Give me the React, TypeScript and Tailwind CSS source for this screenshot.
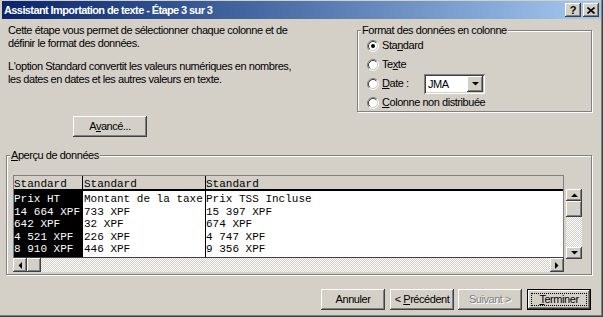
import React from 'react';

const raised =
  'shadow-[inset_-1px_-1px_#404040,inset_1px_1px_#ffffff,inset_-2px_-2px_#808080,inset_2px_2px_#d4d0c8]';
const sunken =
  'shadow-[inset_1px_1px_#808080,inset_-1px_-1px_#ffffff,inset_2px_2px_#404040,inset_-2px_-2px_#d4d0c8]';
const checker = 'bg-[repeating-conic-gradient(#ffffff_0_25%,#d4d0c8_0_50%)] bg-[length:2px_2px]';

function Radio({ checked }: { checked?: boolean }) {
  return (
    <svg width="12" height="12" viewBox="0 0 12 12" className="shrink-0">
      <circle cx="6" cy="6" r="4.5" fill="#ffffff" />
      <path d="M2.11 9.89 A5.5 5.5 0 0 1 9.89 2.11" stroke="#808080" fill="none" />
      <path d="M9.89 2.11 A5.5 5.5 0 0 1 2.11 9.89" stroke="#ffffff" fill="none" />
      <path d="M2.82 9.18 A4.5 4.5 0 0 1 9.18 2.82" stroke="#404040" fill="none" />
      <path d="M9.18 2.82 A4.5 4.5 0 0 1 2.82 9.18" stroke="#d4d0c8" fill="none" />
      {checked && <circle cx="6" cy="6" r="2" fill="#000000" />}
    </svg>
  );
}

function Arrow({ dir }: { dir: 'up' | 'down' | 'left' | 'right' }) {
  const pts = {
    up: '0,4 7,4 3.5,0.5',
    down: '0,0 7,0 3.5,3.5',
    left: '4,0 4,7 0.5,3.5',
    right: '0,0 0,7 3.5,3.5',
  }[dir];
  const vertical = dir === 'up' || dir === 'down';
  return (
    <svg width={vertical ? 7 : 4} height={vertical ? 4 : 7} viewBox={vertical ? '0 0 7 4' : '0 0 4 7'}>
      <polygon points={pts} fill="#000000" />
    </svg>
  );
}

function Key({ children }: { children: React.ReactNode }) {
  return <span className="underline underline-offset-[1px]">{children}</span>;
}

function Button({ children, w = 'w-[64px]', className = '' }: { children: React.ReactNode; w?: string; className?: string }) {
  return (
    <div className={`${w} h-[21px] ${raised} flex items-center justify-center ${className}`}>{children}</div>
  );
}

const col1 = ['Prix HT', '14 664 XPF', '642 XPF', '4 521 XPF', '8 910 XPF'];
const col2 = ['Montant de la taxe', '733 XPF', '32 XPF', '226 XPF', '446 XPF'];
const col3 = ['Prix TSS Incluse', '15 397 XPF', '674 XPF', '4 747 XPF', '9 356 XPF'];

export default function App() {
  return (
    <div className="w-[603px] h-[317px] bg-[#d4d0c8] px-[2px] pt-[1px] text-[11px] leading-[13px] tracking-[-0.45px] text-black font-['Liberation_Sans',Arial,sans-serif] overflow-hidden shadow-[inset_-1px_-1px_#404040,inset_-2px_-2px_#808080]">
      {/* title bar */}
      <div className="h-[18px] flex items-center pl-[2px] pr-[2px] bg-linear-to-r from-[#0a246a] to-[#a6caf0]">
        <span className="text-white font-bold text-[11px] tracking-[-0.6px]">Assistant Importation de texte - Étape 3 sur 3</span>
        <div className="ml-auto flex gap-[2px]">
          <div className={`w-[16px] h-[14px] bg-[#d4d0c8] ${raised} flex items-center justify-center font-bold text-[11px] leading-none`}>
            ?
          </div>
          <div className={`w-[16px] h-[14px] bg-[#d4d0c8] ${raised} flex items-center justify-center`}>
            <svg width="8" height="7" viewBox="0 0 8 7">
              <path d="M0.5 0.5 L7.5 6.5 M7.5 0.5 L0.5 6.5" stroke="#000" strokeWidth="1.6" />
            </svg>
          </div>
        </div>
      </div>

      {/* top section */}
      <div className="flex mt-[5px]">
        <div className="pl-[6px]">
          <p>Cette étape vous permet de sélectionner chaque colonne et de</p>
          <p>définir le format des données.</p>
          <p className="mt-[10px]">L'option Standard convertit les valeurs numériques en nombres,</p>
          <p>les dates en dates et les autres valeurs en texte.</p>
        </div>
        <fieldset className="ml-auto mr-[9px] w-[235px] h-[88px] border border-[#808080] shadow-[inset_1px_1px_#ffffff,1px_1px_#ffffff]">
          <legend className="ml-[3px] px-[1px] bg-[#d4d0c8]">Format des données en colonne</legend>
          <div className="-mt-[1px] pl-[9px]">
            <div className="h-[19px] flex items-center gap-[3px]">
              <Radio checked />
              <span>
                Sta<Key>n</Key>dard
              </span>
            </div>
            <div className="h-[19px] flex items-center gap-[3px]">
              <Radio />
              <span>
                Te<Key>x</Key>te
              </span>
            </div>
            <div className="h-[19px] flex items-center gap-[3px]">
              <Radio />
              <span className="w-[39px]">
                <Key>D</Key>ate :
              </span>
              <div className={`w-[61px] h-[20px] bg-white ${sunken} p-[2px] flex`}>
                <span className="flex-1 pl-[2px] leading-[16px]">JMA</span>
                <div className={`w-[16px] h-[16px] bg-[#d4d0c8] ${raised} flex items-center justify-center`}>
                  <Arrow dir="down" />
                </div>
              </div>
            </div>
            <div className="h-[19px] flex items-center gap-[3px]">
              <Radio />
              <span>
                <Key>C</Key>olonne non distribuée
              </span>
            </div>
          </div>
        </fieldset>
      </div>

      <Button w="w-[74px]" className="ml-[71px] mt-[4px] h-[20px]">
        <span>
          A<Key>v</Key>ancé...
        </span>
      </Button>

      {/* preview */}
      <fieldset className="mt-[12px] ml-[4px] mr-[9px] h-[126px] border border-[#808080] shadow-[inset_1px_1px_#ffffff,1px_1px_#ffffff]">
        <legend className="ml-[3px] px-[1px] bg-[#d4d0c8]">
          <Key>A</Key>perçu de données
        </legend>
        <div className="flex gap-[2px] pl-[6px] mt-[13px]">
          <div className="w-[551px]">
            <div className="h-[83px] border border-[#808080] border-b-[#404040] bg-white flex font-['Liberation_Mono',monospace] text-[11px] tracking-normal">
              <div className="w-[69px] border-r border-black flex flex-col">
                <div className="h-[15px] pt-[2px] leading-[12px] bg-[#d4d0c8] border-b-2 border-black">Standard</div>
                <div className="flex-1 bg-black text-white pt-[2px] leading-[12.5px] whitespace-pre">
                  {col1.map((t) => (
                    <div key={t}>{t}</div>
                  ))}
                </div>
              </div>
              <div className="w-[123px] border-r border-black flex flex-col">
                <div className="h-[15px] pt-[2px] pl-[1px] leading-[12px] bg-[#d4d0c8] border-b-2 border-black">Standard</div>
                <div className="flex-1 pl-[1px] pt-[2px] leading-[12.5px] whitespace-pre">
                  {col2.map((t) => (
                    <div key={t}>{t}</div>
                  ))}
                </div>
              </div>
              <div className="flex-1 flex flex-col">
                <div className="h-[15px] pt-[2px] leading-[12px] bg-[#d4d0c8] border-b-2 border-black">Standard</div>
                <div className="flex-1 pt-[2px] leading-[12.5px] whitespace-pre">
                  {col3.map((t) => (
                    <div key={t}>{t}</div>
                  ))}
                </div>
              </div>
            </div>
            <div className={`h-[14px] flex ${checker}`}>
              <div className={`w-[14px] h-full bg-[#d4d0c8] ${raised} flex items-center justify-center`}>
                <Arrow dir="left" />
              </div>
              <div className={`w-[14px] h-full bg-[#d4d0c8] ${raised}`} />
              <div className={`ml-auto w-[14px] h-full bg-[#d4d0c8] ${raised} flex items-center justify-center`}>
                <Arrow dir="right" />
              </div>
            </div>
          </div>
          <div className={`mt-[14px] w-[16px] h-[70px] flex flex-col ${checker}`}>
            <div className={`h-[12px] bg-[#d4d0c8] ${raised} flex items-center justify-center`}>
              <Arrow dir="up" />
            </div>
            <div className={`h-[16px] bg-[#d4d0c8] ${raised}`} />
            <div className={`mt-auto h-[12px] bg-[#d4d0c8] ${raised} flex items-center justify-center`}>
              <Arrow dir="down" />
            </div>
          </div>
        </div>
      </fieldset>

      {/* buttons */}
      <div className="flex justify-end mr-[10px] mt-[14px]">
        <Button>Annuler</Button>
        <Button className="ml-[5px]">
          <span>
            &lt; <Key>P</Key>récédent
          </span>
        </Button>
        <Button className="ml-[4px] text-[#808080] [text-shadow:1px_1px_#ffffff]">Suivant &gt;</Button>
        <div className="ml-[5px] w-[64px] h-[21px] border border-black">
          <div className={`h-full ${raised} p-[3px]`}>
            <div className="h-full border border-dotted border-black flex items-center justify-center">
              <span>
                <Key>T</Key>erminer
              </span>
            </div>
          </div>
        </div>
      </div>
    </div>
  );
}
